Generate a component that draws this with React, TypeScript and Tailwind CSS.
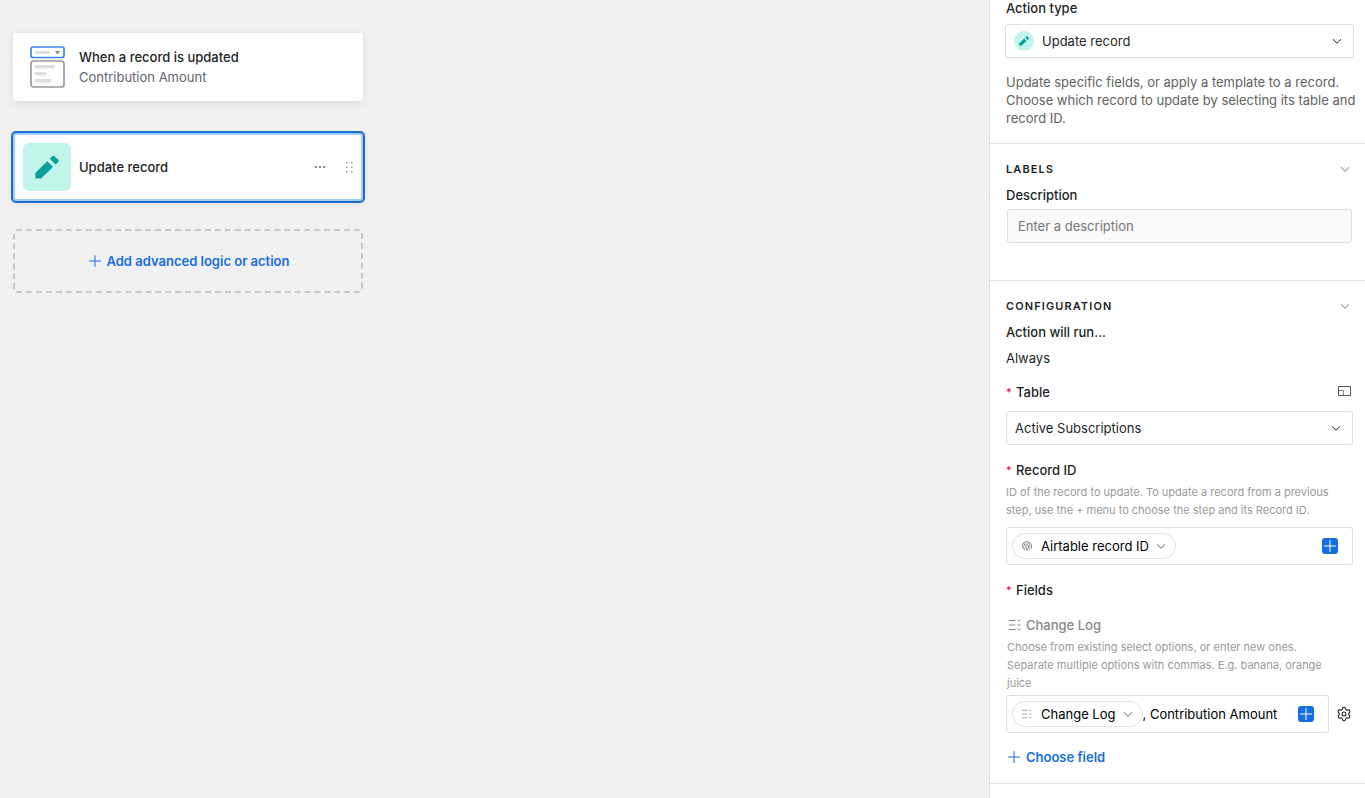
import { useState } from 'react';
import type { ReactNode } from 'react';
import { Settings } from 'lucide-react';
import { PiCaretDown, PiFingerprint, PiPlus } from 'react-icons/pi';

function PencilIcon({ className }: { className?: string }) {
  return (
    <svg viewBox="0 0 24 24" fill="currentColor" className={className} aria-hidden="true">
      <path d="M17.3 1.2a1.700 1.700 0 0 1 2.300 0l3.600 3.600a1.700 1.700 0 0 1 0 2.300l-2.500 2.500-5.900-5.900z" />
      <path d="M12.300 6.200 18 11.900 6.600 23a2 2 0 0 1-1.400.600H1.900A1.500 1.500 0 0 1 .400 22.100v-3.400a2 2 0 0 1 .600-1.400z" />
    </svg>
  );
}

function TriggerIcon() {
  return (
    <svg width="35" height="42" viewBox="0 0 35 42" fill="none" aria-hidden="true">
      <rect x="1" y="1" width="33" height="10.500" rx="2" fill="#fff" stroke="#3b86ea" strokeWidth="1.700" />
      <rect x="5" y="5" width="15" height="3" rx="1.500" fill="#dedede" />
      <path d="M25 5h5l-2.500 3.500z" fill="#858585" />
      <rect x="1" y="15" width="33" height="26" rx="2.500" fill="#fff" stroke="#9b9b9b" strokeWidth="1.700" />
      <rect x="4.500" y="19" width="20.500" height="3.500" rx="1.700" fill="#dedede" />
      <rect x="4.500" y="26" width="12" height="3.500" rx="1.700" fill="#dedede" />
      <rect x="4.500" y="33" width="17" height="3.500" rx="1.700" fill="#dedede" />
    </svg>
  );
}

function MultiSelectIcon({ className }: { className?: string }) {
  return (
    <svg viewBox="0 0 14 12" fill="none" stroke="currentColor" className={className} aria-hidden="true">
      <path d="M1 1.500h6.500M1 6h6.500M1 10.500h6.500" />
      <path d="m9.500.800 1.500 1.200L12.500.800M9.500 5.300 11 6.500l1.500-1.200M9.500 9.800l1.500 1.200 1.500-1.200" />
    </svg>
  );
}

function Select({ label, id, options, children }: { label: string; id: string; options: string[]; children?: ReactNode }) {
  return (
    <div className="relative">
      {children}
      <select
        id={id}
        aria-label={label}
        className={`block h-[34px] w-full appearance-none rounded-[3px] border border-[#dedede] bg-white pr-9 ${children ? 'pl-9' : 'pl-2'}`}
      >
        {options.map((o) => (
          <option key={o}>{o}</option>
        ))}
      </select>
      <PiCaretDown className="pointer-events-none absolute top-[11px] right-[11px] size-3" />
    </div>
  );
}

function Token({ icon, children }: { icon: ReactNode; children: ReactNode }) {
  return (
    <button type="button" className="flex h-[26px] shrink-0 items-center rounded-full border border-[#e3e3e3] px-2 text-black">
      {icon}
      <span className="ml-2">{children}</span>
      <PiCaretDown className="ml-1.5 size-3 text-[#666]" />
    </button>
  );
}

function InsertButton() {
  return (
    <button type="button" aria-label="Insert value" className="flex size-4 shrink-0 items-center justify-center rounded-[3px] bg-[#166ee1] text-white">
      <PiPlus className="size-4" />
    </button>
  );
}

function SectionHeading({ children }: { children: ReactNode }) {
  return (
    <div className="mb-2 flex items-center justify-between pr-0.5">
      <h2 className="text-[11px] leading-[18px] font-semibold tracking-widest uppercase">{children}</h2>
      <button type="button" aria-label="Collapse section">
        <PiCaretDown className="size-3 text-[#777]" />
      </button>
    </div>
  );
}

function Required({ htmlFor, children }: { htmlFor?: string; children: ReactNode }) {
  return (
    <label htmlFor={htmlFor} className="flex items-center font-medium">
      <span className="w-2.5 text-[11px] text-[#d1123f]">*</span>
      {children}
    </label>
  );
}

export default function App() {
  const [description, setDescription] = useState('');
  const [extra, setExtra] = useState(', Contribution Amount');

  return (
    <div className="flex min-h-screen bg-[#f1f1f1] font-[Inter,sans-serif] text-[13px] leading-[18px] text-[#1d1f25]">
      {/* WORKFLOW */}
      <main className="min-w-0 flex-1 px-[13px] pt-[33px]">
        <div className="w-full max-w-[350px]">
          <button type="button" className="flex h-[68px] w-full items-center rounded-[3px] bg-white pl-[17px] text-left shadow-[0_2px_8px_rgba(0,0,0,0.1)]">
            <TriggerIcon />
            <span className="ml-3.5 leading-5">
              <span className="block font-medium">When a record is updated</span>
              <span className="block text-[#616670]">Contribution Amount</span>
            </span>
          </button>

          <div className="mt-8 flex h-[68px] items-center rounded-[3px] border-2 border-[#a0cbff] bg-white px-2 shadow-[0_2px_8px_rgba(0,0,0,0.1)] ring-2 ring-[#1d6ccc]">
            <div className="flex size-12 items-center justify-center rounded-md bg-[#c2f5e9] text-[#06a09b]">
              <PencilIcon className="size-6" />
            </div>
            <span className="ml-2 flex-1 font-medium">Update record</span>
            <button type="button" aria-label="More actions" className="mr-5 text-[#888]">
              <svg width="11" height="10" viewBox="0 0 11 10" fill="currentColor">
                <path d="M0 4h2v2H0zM4 4h2v2H4zM8 4h2v2H8z" />
              </svg>
            </button>
            <button type="button" aria-label="Reorder" className="text-[#999]">
              <svg width="7" height="11" viewBox="0 0 7 11" fill="currentColor">
                <path d="M0 0h1.500v1.500H0zM5 0h1.500v1.500H5zM0 4.500h1.500V6H0zM5 4.500h1.500V6H5zM0 9h1.500v1.500H0zM5 9h1.500v1.500H5z" />
              </svg>
            </button>
          </div>

          <button type="button" className="mt-7 flex h-16 w-full items-center justify-center gap-1 rounded-[3px] border-2 border-dashed border-[#c5c7cd] font-semibold text-[#166ee1]">
            <PiPlus className="size-4" />
            Add advanced logic or action
          </button>
        </div>
      </main>

      {/* PROPERTIES */}
      <aside className="w-94 shrink-0 border-l border-[#dcdcdc] bg-white">
        <section className="border-b border-[#e2e2e2] pr-3 pb-4 pl-4">
          <label htmlFor="action-type" className="mb-2 block leading-4 font-medium">Action type</label>
          <div className="-mx-px">
            <Select id="action-type" label="Action type" options={['Update record', 'Create record']}>
              <span className="pointer-events-none absolute top-[7px] left-[9px] flex size-5 items-center justify-center rounded-full bg-[#c2f5e9] text-[#06a09b]">
                <PencilIcon className="size-2.5" />
              </span>
            </Select>
          </div>
          <p className="mt-[15px] -mr-2 text-[#616161]">
            Update specific fields, or apply a template to a record. Choose which record to update by selecting its table and record ID.
          </p>
        </section>

        <section className="border-b border-[#e2e2e2] pt-4 pr-3 pb-[37px] pl-4">
          <SectionHeading>Labels</SectionHeading>
          <label htmlFor="description" className="mb-[5px] block font-medium">Description</label>
          <div className="px-px">
            <input
              id="description"
              value={description}
              onChange={(e) => setDescription(e.target.value)}
              placeholder="Enter a description"
              className="block h-[34px] w-full rounded-[3px] border border-[#dedede] bg-[#fafafa] px-2.5 placeholder:text-[#757575]"
            />
          </div>
        </section>

        <section className="border-b border-[#e2e2e2] pt-4 pr-3 pb-[17px] pl-4">
          <SectionHeading>Configuration</SectionHeading>
          <h3 className="font-medium">Action will run...</h3>
          <p className="mt-2">Always</p>

          <div className="mt-4 mb-2.5 flex items-start justify-between">
            <Required htmlFor="table">Table</Required>
            <button type="button" aria-label="Expand table" className="mt-[3px] mr-0.5 text-[#555]">
              <svg width="13" height="10" viewBox="0 0 13 10" fill="none" stroke="currentColor">
                <path d="M.500.500h12v9H.500z" />
                <path d="M.500 4.500h5v5" strokeOpacity=".7" />
              </svg>
            </button>
          </div>
          <Select id="table" label="Table" options={['Active Subscriptions']} />

          <div className="mt-4">
            <Required>Record ID</Required>
          </div>
          <p className="mt-1 text-[11px] leading-[18px] text-[#9a9a9a]">
            ID of the record to update. To update a record from a previous step, use the + menu to choose the step and its Record ID.
          </p>
          <div className="mt-2 flex h-[38px] items-center justify-between rounded-[3px] border border-[#dedede] pr-3.5 pl-[5px]">
            <Token icon={<PiFingerprint className="size-3 text-[#777]" />}>Airtable record ID</Token>
            <InsertButton />
          </div>

          <div className="mt-4">
            <Required>Fields</Required>
          </div>
          <div className="mt-[17px] flex items-center pl-0.5 font-medium text-[#888]">
            <MultiSelectIcon className="mr-1 h-3 w-3.5" />
            <label htmlFor="change-log">Change Log</label>
          </div>
          <p className="mt-1 pr-5 pl-px text-[11px] leading-[18px] text-[#9a9a9a]">
            Choose from existing select options, or enter new ones. Separate multiple options with commas. E.g. banana, orange juice
          </p>
          <div className="mt-[3px] flex items-center">
            <div className="flex h-[38px] min-w-0 flex-1 items-center rounded-[3px] border border-[#dedede] pr-3.5 pl-[5px]">
              <Token icon={<MultiSelectIcon className="h-2.5 w-3 text-[#999]" />}>Change Log</Token>
              <input
                id="change-log"
                value={extra}
                onChange={(e) => setExtra(e.target.value)}
                className="min-w-0 flex-1 text-black outline-none"
              />
              <InsertButton />
            </div>
            <button type="button" aria-label="Field settings" className="mr-px ml-[7px]">
              <Settings className="size-4" strokeWidth={1.6} />
            </button>
          </div>

          <button type="button" className="mt-[15px] flex items-center gap-1 font-semibold text-[#166ee1]">
            <PiPlus className="size-4" />
            Choose field
          </button>
        </section>
      </aside>
    </div>
  );
}
